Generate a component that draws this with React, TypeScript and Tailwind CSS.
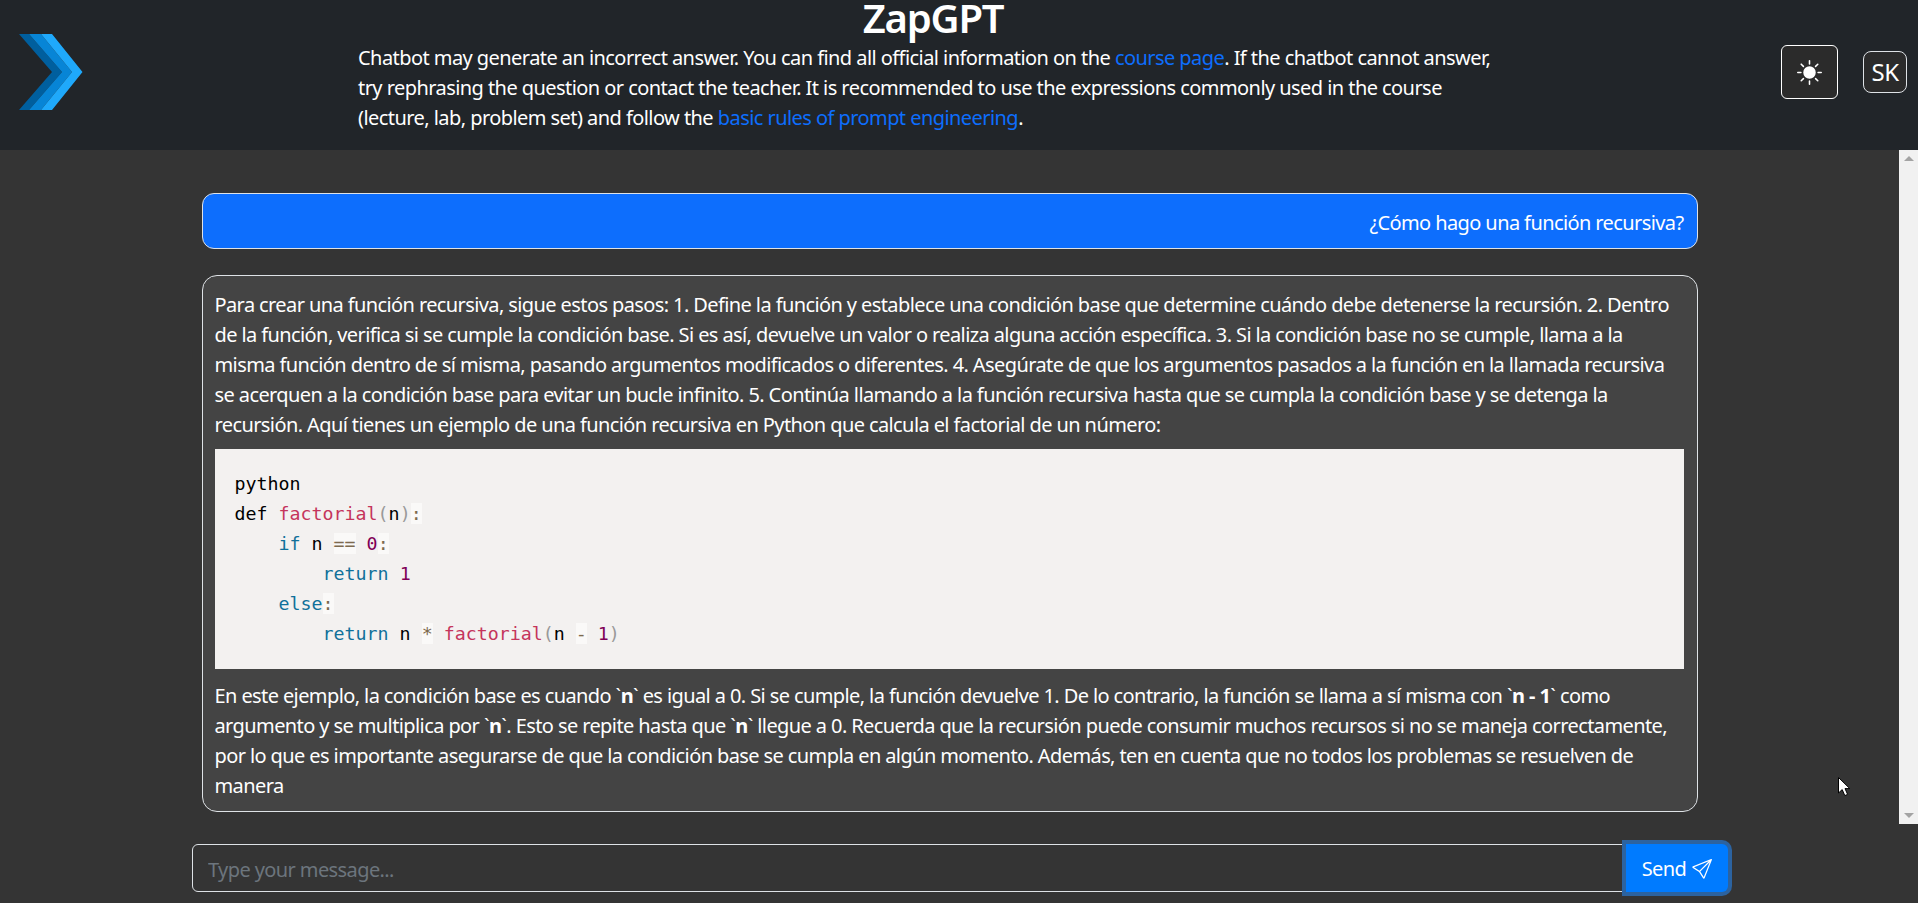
import React from 'react';
import { BsSend, BsSunFill } from 'react-icons/bs';

const Logo: React.FC = () => (
  <svg width="64" height="76" viewBox="0 0 64 76" className="shrink-0">
    <polygon points="0,0 10,0 43,38 10,76 0,76 33,38" fill="#005f9e" />
    <polygon points="10,0 22,0 53,38 22,76 10,76 43,38" fill="#0785d6" />
    <polygon points="22,0 33,0 63.5,38 33,76 22,76 53,38" fill="#1fa9fb" />
  </svg>
);

const Code: React.FC<{ c: string; children: React.ReactNode }> = ({ c, children }) => (
  <span className={c}>{children}</span>
);

const Punct: React.FC<{ children: React.ReactNode }> = ({ children }) => (
  <span className="bg-[#faf9f8] text-[#7d6a4f]">{children}</span>
);

const Tick: React.FC<{ children: React.ReactNode }> = ({ children }) => (
  <>`<strong className="font-bold">{children}</strong>`</>
);

const App: React.FC = () => {
  return (
    <div className="h-[903px] w-full flex flex-col overflow-hidden bg-[#343434] text-white font-['Noto_Sans',sans-serif] text-[20px] leading-[30px] tracking-[-0.03em]">
      <header className="h-[150px] shrink-0 bg-[#212529] flex items-center pb-[6px] relative">
        <div className="w-[358px] shrink-0 pl-[19px]">
          <Logo />
        </div>
        <div className="w-[1150px] shrink-0 self-start tracking-[-0.028em]">
          <h1 className="text-center text-[40px] leading-[36px] font-semibold tracking-[-0.03em]">ZapGPT</h1>
          <p className="mt-[7px]">
            Chatbot may generate an incorrect answer. You can find all official information on the{' '}
            <a className="text-[#0d6efd]">course page</a>. If the chatbot cannot answer,<br />
            try rephrasing the question or contact the teacher. It is recommended to use the expressions commonly used in the course<br />
            (lecture, lab, problem set) and follow the <a className="text-[#0d6efd]">basic rules of prompt engineering</a>.
          </p>
        </div>
        <div className="flex-1 flex items-center">
          <button className="ml-[273px] w-[57px] h-[54px] rounded-[6px] border border-white bg-[#2b2b2b] flex items-center justify-center">
            <BsSunFill size={25} />
          </button>
          <button className="ml-[25px] w-[44px] h-[42px] rounded-[8px] border border-[#dee2e6] bg-[#2b2b2b] text-[24px] flex items-center justify-center">
            SK
          </button>
        </div>
      </header>

      <div className="h-[674px] shrink-0 flex">
        <main className="flex-1 pt-[43px]">
          <div className="w-[1496px] mx-auto flex flex-col gap-[26px]">
            <div className="h-[56px] rounded-[12px] border border-[#dee2e6] bg-[#0d6efd] pl-3 pr-[13px] pt-[3px] flex items-center justify-end">
              ¿Cómo hago una función recursiva?
            </div>
            <div className="rounded-[15px] border border-[#dee2e6] bg-[#444444] pl-3 pr-[13px] pt-[14px] pb-[10px]">
              <p>
                Para crear una función recursiva, sigue estos pasos: 1. Define la función y establece una condición base que determine cuándo debe detenerse la recursión. 2. Dentro<br />
                de la función, verifica si se cumple la condición base. Si es así, devuelve un valor o realiza alguna acción específica. 3. Si la condición base no se cumple, llama a la<br />
                misma función dentro de sí misma, pasando argumentos modificados o diferentes. 4. Asegúrate de que los argumentos pasados a la función en la llamada recursiva<br />
                se acerquen a la condición base para evitar un bucle infinito. 5. Continúa llamando a la función recursiva hasta que se cumpla la condición base y se detenga la<br />
                recursión. Aquí tienes un ejemplo de una función recursiva en Python que calcula el factorial de un número:
              </p>
              <pre className="mt-[9px] mb-[12px] bg-[#f3f1f0] p-5 text-black font-['DejaVu_Sans_Mono',monospace] text-[18.3px] leading-[30px] tracking-normal">
                <div>python</div>
                <div>def <Code c="text-[#c5355c]">factorial</Code><Code c="text-[#999]">(</Code>n<Code c="text-[#999]">)</Code><Punct>:</Punct></div>
                <div>    <Code c="text-[#10709a]">if</Code> n <Punct>==</Punct> <Code c="text-[#800055]">0</Code><Punct>:</Punct></div>
                <div>        <Code c="text-[#10709a]">return</Code> <Code c="text-[#800055]">1</Code></div>
                <div>    <Code c="text-[#10709a]">else</Code><Punct>:</Punct></div>
                <div>        <Code c="text-[#10709a]">return</Code> n <Punct>*</Punct> <Code c="text-[#c5355c]">factorial</Code><Code c="text-[#999]">(</Code>n <Punct>-</Punct> <Code c="text-[#800055]">1</Code><Code c="text-[#999]">)</Code></div>
              </pre>
              <p>
                En este ejemplo, la condición base es cuando <Tick>n</Tick> es igual a 0. Si se cumple, la función devuelve 1. De lo contrario, la función se llama a sí misma con <Tick>n - 1</Tick> como<br />
                argumento y se multiplica por <Tick>n</Tick>. Esto se repite hasta que <Tick>n</Tick> llegue a 0. Recuerda que la recursión puede consumir muchos recursos si no se maneja correctamente,<br />
                por lo que es importante asegurarse de que la condición base se cumpla en algún momento. Además, ten en cuenta que no todos los problemas se resuelven de<br />
                manera
              </p>
            </div>
          </div>
        </main>
        <div className="w-[19px] shrink-0 bg-[#f1f1f1] flex flex-col items-center justify-between py-[6px]">
          <div className="w-0 h-0 border-x-[5px] border-x-transparent border-b-[5px] border-b-[#a3a3a3]" />
          <div className="w-0 h-0 border-x-[5px] border-x-transparent border-t-[5px] border-t-[#a3a3a3]" />
        </div>
      </div>

      <div className="w-[1536px] ml-[192px] mt-[20px] flex relative">
        <input
          placeholder="Type your message..."
          className="flex-1 h-[48px] rounded-l-[6px] border border-[#dee2e6] bg-transparent px-[15px] pt-[3px] outline-none placeholder:text-[#6c757d]"
        />
        <button className="w-[102px] h-[48px] pt-[2px] rounded-r-[6px] bg-[#007bff] shadow-[0_0_0_4px_#2c63a0] flex items-center justify-center gap-[6px] relative">
          Send <BsSend size={20} />
        </button>
      </div>

      <svg width="13" height="20" viewBox="0 0 13 20" className="absolute left-[1838px] top-[777px]">
        <polygon points="0.5,0.5 0.5,16 4.2,12.6 6.8,18.6 9.6,17.4 7,11.6 11.8,11.6" fill="white" stroke="black" strokeWidth="1" />
      </svg>
    </div>
  );
};

export default App;
